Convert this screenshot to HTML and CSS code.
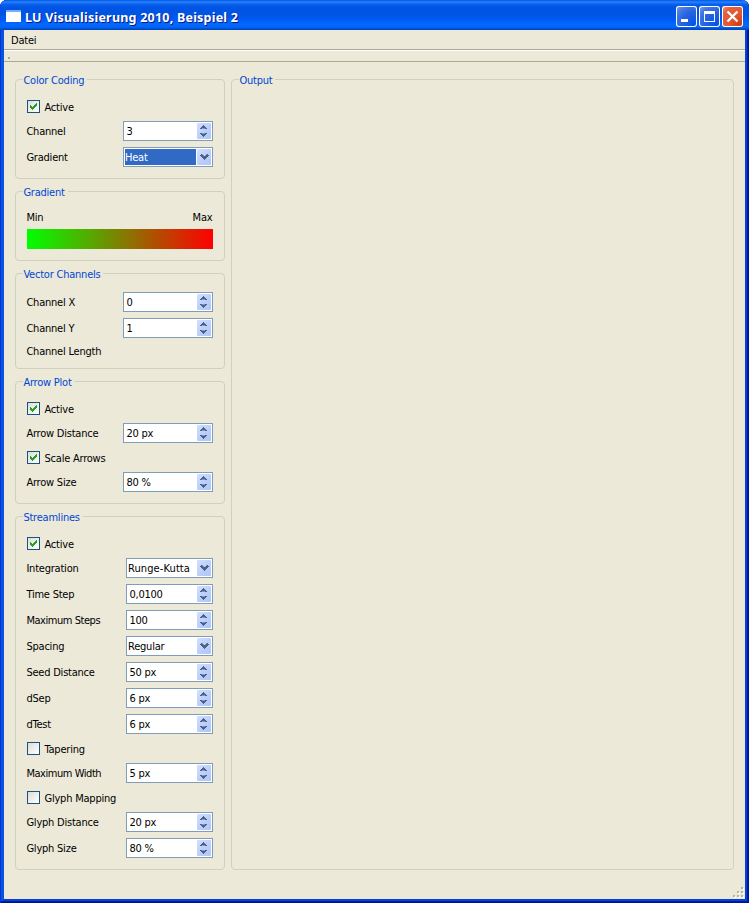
FILE: index.html
```
<!DOCTYPE html>
<html lang="de">
<head>
<meta charset="utf-8">
<title>LU Visualisierung 2010, Beispiel 2</title>
<link rel="stylesheet" href="styles.css">
</head>
<body>
<svg class="defs" width="0" height="0">
  <symbol id="check" viewBox="0 0 7 7"><path d="M0 2h1v1h1v1h1v-1h1v-1h1v-1h1v-1h1v3h-1v1h-1v1h-1v1h-1v1h-1v-1h-1v-1h-1z"/></symbol>
  <symbol id="up" viewBox="0 0 7 4"><path d="M3 0h1v1h1v1h1v1h1v1h-2v-.5h-3v.5h-2v-1h1v-1h1v-1h1z"/></symbol>
  <symbol id="down" viewBox="0 0 7 4"><path d="M0 0h2v.5h3v-.5h2v1h-1v1h-1v1h-1v1h-1v-1h-1v-1h-1v-1h-1z"/></symbol>
  <symbol id="chevron" viewBox="0 0 9 6"><path d="M1 0h1.500v1h1v1h2v-1h1v-1h1.500v1h1v1h-1v1h-1v1h-1v1h-1v1h-1v-1h-1v-1h-1v-1h-1v-1h-1v-1h1z"/></symbol>
</svg>
<div class="window">
  <header class="titlebar">
    <span class="appicon"></span>
    <h1>LU Visualisierung 2010, Beispiel 2</h1>
    <div class="winbtn"><svg width="21" height="21"><path d="M5 13h7v3h-7z" fill="#fff"/></svg></div>
    <div class="winbtn"><svg width="21" height="21"><path d="M5 5h11v11h-11zM6 8v7h9v-7z" fill="#fff" fill-rule="evenodd"/></svg></div>
    <div class="winbtn close"><svg width="21" height="21"><path d="M5.5 5.5l10 10M15.500 5.500l-10 10" stroke="#fff" stroke-width="2.300"/></svg></div>
  </header>
  <nav class="menubar"><span>Datei</span></nav>
  <div class="toolbar"><i></i></div>
  <main class="content">
    <div class="settings">
      <section class="group coding">
        <h2>Color Coding</h2>
        <div class="checkrow"><span class="box"><svg width="7" height="7"><use href="#check"/></svg></span><span class="text">Active</span></div>
        <div class="row"><label>Channel</label><div class="field"><span>3</span><div class="spin"><svg width="7" height="4"><use href="#up"/></svg><svg width="7" height="4"><use href="#down"/></svg></div></div></div>
        <div class="row"><label>Gradient</label><div class="field combo selected"><span>Heat</span><div class="drop"><svg width="9" height="6"><use href="#chevron"/></svg></div></div></div>
      </section>
      <section class="group gradient">
        <h2>Gradient</h2>
        <div class="minmax"><span>Min</span><span>Max</span></div>
        <div class="ramp"></div>
      </section>
      <section class="group vector">
        <h2>Vector Channels</h2>
        <div class="row"><label>Channel X</label><div class="field"><span>0</span><div class="spin"><svg width="7" height="4"><use href="#up"/></svg><svg width="7" height="4"><use href="#down"/></svg></div></div></div>
        <div class="row"><label>Channel Y</label><div class="field"><span>1</span><div class="spin"><svg width="7" height="4"><use href="#up"/></svg><svg width="7" height="4"><use href="#down"/></svg></div></div></div>
        <div class="row short"><label>Channel Length</label></div>
      </section>
      <section class="group arrows">
        <h2>Arrow Plot</h2>
        <div class="checkrow"><span class="box"><svg width="7" height="7"><use href="#check"/></svg></span><span class="text">Active</span></div>
        <div class="row"><label>Arrow Distance</label><div class="field"><span>20 px</span><div class="spin"><svg width="7" height="4"><use href="#up"/></svg><svg width="7" height="4"><use href="#down"/></svg></div></div></div>
        <div class="checkrow"><span class="box"><svg width="7" height="7"><use href="#check"/></svg></span><span class="text">Scale Arrows</span></div>
        <div class="row"><label>Arrow Size</label><div class="field"><span>80 %</span><div class="spin"><svg width="7" height="4"><use href="#up"/></svg><svg width="7" height="4"><use href="#down"/></svg></div></div></div>
      </section>
      <section class="group streams">
        <h2>Streamlines</h2>
        <div class="checkrow"><span class="box"><svg width="7" height="7"><use href="#check"/></svg></span><span class="text">Active</span></div>
        <div class="row"><label>Integration</label><div class="field combo"><span class="loose">Runge-Kutta</span><div class="drop"><svg width="9" height="6"><use href="#chevron"/></svg></div></div></div>
        <div class="row"><label>Time Step</label><div class="field"><span>0,0100</span><div class="spin"><svg width="7" height="4"><use href="#up"/></svg><svg width="7" height="4"><use href="#down"/></svg></div></div></div>
        <div class="row"><label class="tight">Maximum Steps</label><div class="field"><span>100</span><div class="spin"><svg width="7" height="4"><use href="#up"/></svg><svg width="7" height="4"><use href="#down"/></svg></div></div></div>
        <div class="row"><label>Spacing</label><div class="field combo"><span>Regular</span><div class="drop"><svg width="9" height="6"><use href="#chevron"/></svg></div></div></div>
        <div class="row"><label>Seed Distance</label><div class="field"><span>50 px</span><div class="spin"><svg width="7" height="4"><use href="#up"/></svg><svg width="7" height="4"><use href="#down"/></svg></div></div></div>
        <div class="row"><label>dSep</label><div class="field"><span>6 px</span><div class="spin"><svg width="7" height="4"><use href="#up"/></svg><svg width="7" height="4"><use href="#down"/></svg></div></div></div>
        <div class="row"><label>dTest</label><div class="field"><span>6 px</span><div class="spin"><svg width="7" height="4"><use href="#up"/></svg><svg width="7" height="4"><use href="#down"/></svg></div></div></div>
        <div class="checkrow"><span class="box"></span><span class="text">Tapering</span></div>
        <div class="row"><label class="tight">Maximum Width</label><div class="field"><span>5 px</span><div class="spin"><svg width="7" height="4"><use href="#up"/></svg><svg width="7" height="4"><use href="#down"/></svg></div></div></div>
        <div class="checkrow"><span class="box"></span><span class="text">Glyph Mapping</span></div>
        <div class="row"><label>Glyph Distance</label><div class="field"><span>20 px</span><div class="spin"><svg width="7" height="4"><use href="#up"/></svg><svg width="7" height="4"><use href="#down"/></svg></div></div></div>
        <div class="row"><label>Glyph Size</label><div class="field"><span>80 %</span><div class="spin"><svg width="7" height="4"><use href="#up"/></svg><svg width="7" height="4"><use href="#down"/></svg></div></div></div>
      </section>
    </div>
    <section class="group output"><h2>Output</h2></section>
  </main>
  <svg class="grip" width="11" height="11"><path d="M9 1h2v2h-2zM5 5h2v2h-2zM9 5h2v2h-2zM1 9h2v2h-2zM5 9h2v2h-2zM9 9h2v2h-2z" fill="#fff"/><path d="M8 0h2v2h-2zM4 4h2v2h-2zM8 4h2v2h-2zM0 8h2v2h-2zM4 8h2v2h-2zM8 8h2v2h-2z" fill="#b8b4a2"/></svg>
</div>
</body>
</html>
```
FILE: styles.css
```
* { box-sizing: border-box; }
body {
  margin: 0;
  background: #fff;
  font: 11px/14px "DejaVu Sans Condensed", "DejaVu Sans", sans-serif;
  font-stretch: condensed;
  letter-spacing: -0.22px;
  color: #000;
  white-space: nowrap;
}
svg { display: block; flex: none; }
.defs { position: absolute; }
.window {
  position: relative;
  width: 749px;
  height: 903px;
  display: flex;
  flex-direction: column;
  padding: 0 4px 4px;
  overflow: hidden;
  border-radius: 7px 7px 0 0;
  background: #ece9d8;
  box-shadow: inset 1px 0 #0831d9, inset -1px 0 #00138c, inset 0 -1px #00138c,
    inset -2px -2px #001ea0, inset 3px 0 #0855dd, inset -4px -4px #0441d8, inset 4px 0 #0855dd;
}
.titlebar {
  height: 30px;
  flex: none;
  margin: 0 -4px;
  padding: 3px 6px 0 6px;
  display: flex;
  align-items: center;
  background: linear-gradient(#0058ee 0, #2a80f8 7%, #0a62ee 14%, #0054e3 24%, #0055e5 50%, #005bf5 66%, #0268fe 80%, #0266fc 90%, #0050d0 96%, #0042b8 100%);
}
.appicon {
  width: 15px;
  height: 12px;
  margin-top: -2px;
  background: #fff;
  border-top: 2px solid #75b0f7;
}
h1 {
  margin: 2px auto 0 4px;
  font: bold 12.5px/16px "Noto Sans", sans-serif;
  letter-spacing: 0.22px;
  color: #fff;
  text-shadow: 1px 1px #0a1883;
}
.winbtn {
  width: 21px;
  height: 21px;
  margin-left: 2px;
  border-radius: 3px;
  box-shadow: inset 0 0 0 1px #fff;
  background: radial-gradient(circle at 90% 90%, #0054e9 0, #2663e0 50%, #4479e4 75%, #7ea3ee 100%);
}
.close { background: radial-gradient(circle at 90% 90%, #cc3a10 0, #e0562f 40%, #e3603c 75%, #f0a08a 100%); }
.menubar {
  height: 20px;
  flex: none;
  padding: 4px 7px 0;
  border-bottom: 1px solid #aca899;
}
.toolbar {
  height: 12px;
  flex: none;
  padding: 6px 4px 0;
  border-top: 1px solid #fff;
  border-bottom: 1px solid #aca899;
}
.toolbar i { display: block; width: 2px; height: 2px; background: #aca899; }
.content {
  display: flex;
  gap: 6px;
  padding: 17px 11px 29px;
}
.settings {
  width: 210px;
  display: flex;
  flex-direction: column;
  gap: 12px;
}
.group {
  position: relative;
  border: 1px solid #d0d0bf;
  border-radius: 4px;
  padding: 15px 11px 0;
}
.coding { height: 100px; }
.gradient { height: 70px; }
.vector { height: 96px; }
.arrows { height: 123px; }
.streams { height: 354px; }
.output { width: 503px; height: 791px; }
h2 {
  position: absolute;
  left: 7px;
  top: -6px;
  margin: 0;
  padding: 0 3px 0 0.4px;
  font: inherit;
  color: #0046d5;
  background: #ece9d8;
}
.row {
  height: 26px;
  display: flex;
  align-items: center;
  justify-content: space-between;
}
label { padding-top: 2px; margin-left: -0.6px; }
.tight { letter-spacing: -0.45px; }
.loose { letter-spacing: 0.1px; }
.short { height: 20px; }
.checkrow {
  height: 23px;
  display: flex;
  align-items: center;
  gap: 4.5px;
}
.text { padding-top: 2px; }
.box {
  width: 13px;
  height: 13px;
  display: flex;
  align-items: center;
  justify-content: center;
  border: 1px solid #1c5180;
  background: linear-gradient(135deg, #dcdcd7, #fff);
  fill: #21a121;
}
.field {
  width: 90px;
  height: 20px;
  display: flex;
  align-items: center;
  justify-content: space-between;
  padding: 0 1px 0 2.4px;
  border: 1px solid #7f9db9;
  background: #fff;
}
.field > span { padding-top: 2px; }
.streams .field { width: 87px; }
.field.combo { padding-left: 1px; }
.selected > span {
  width: 71px;
  height: 16px;
  padding-top: 1px;
  line-height: 16px;
  background: #316ac5;
  color: #fff;
}
.spin, .drop {
  width: 14px;
  height: 16px;
  display: flex;
  flex-direction: column;
  align-items: center;
  justify-content: center;
  gap: 4px;
  border-radius: 1px;
  background: linear-gradient(135deg, #d3dfff, #b9cdfb 60%, #aec8f7);
  fill: #4d6185;
}
.spin { padding-right: 1px; }
.drop { padding-left: 1px; }
.minmax {
  height: 20px;
  margin-left: -0.6px;
  padding: 2px 0.6px 0 0;
  display: flex;
  align-items: center;
  justify-content: space-between;
}
.ramp {
  height: 20px;
  margin-top: 2px;
  background: linear-gradient(90deg, #0f0, #f00);
}
.grip { position: absolute; right: 5px; bottom: 5px; }
```
